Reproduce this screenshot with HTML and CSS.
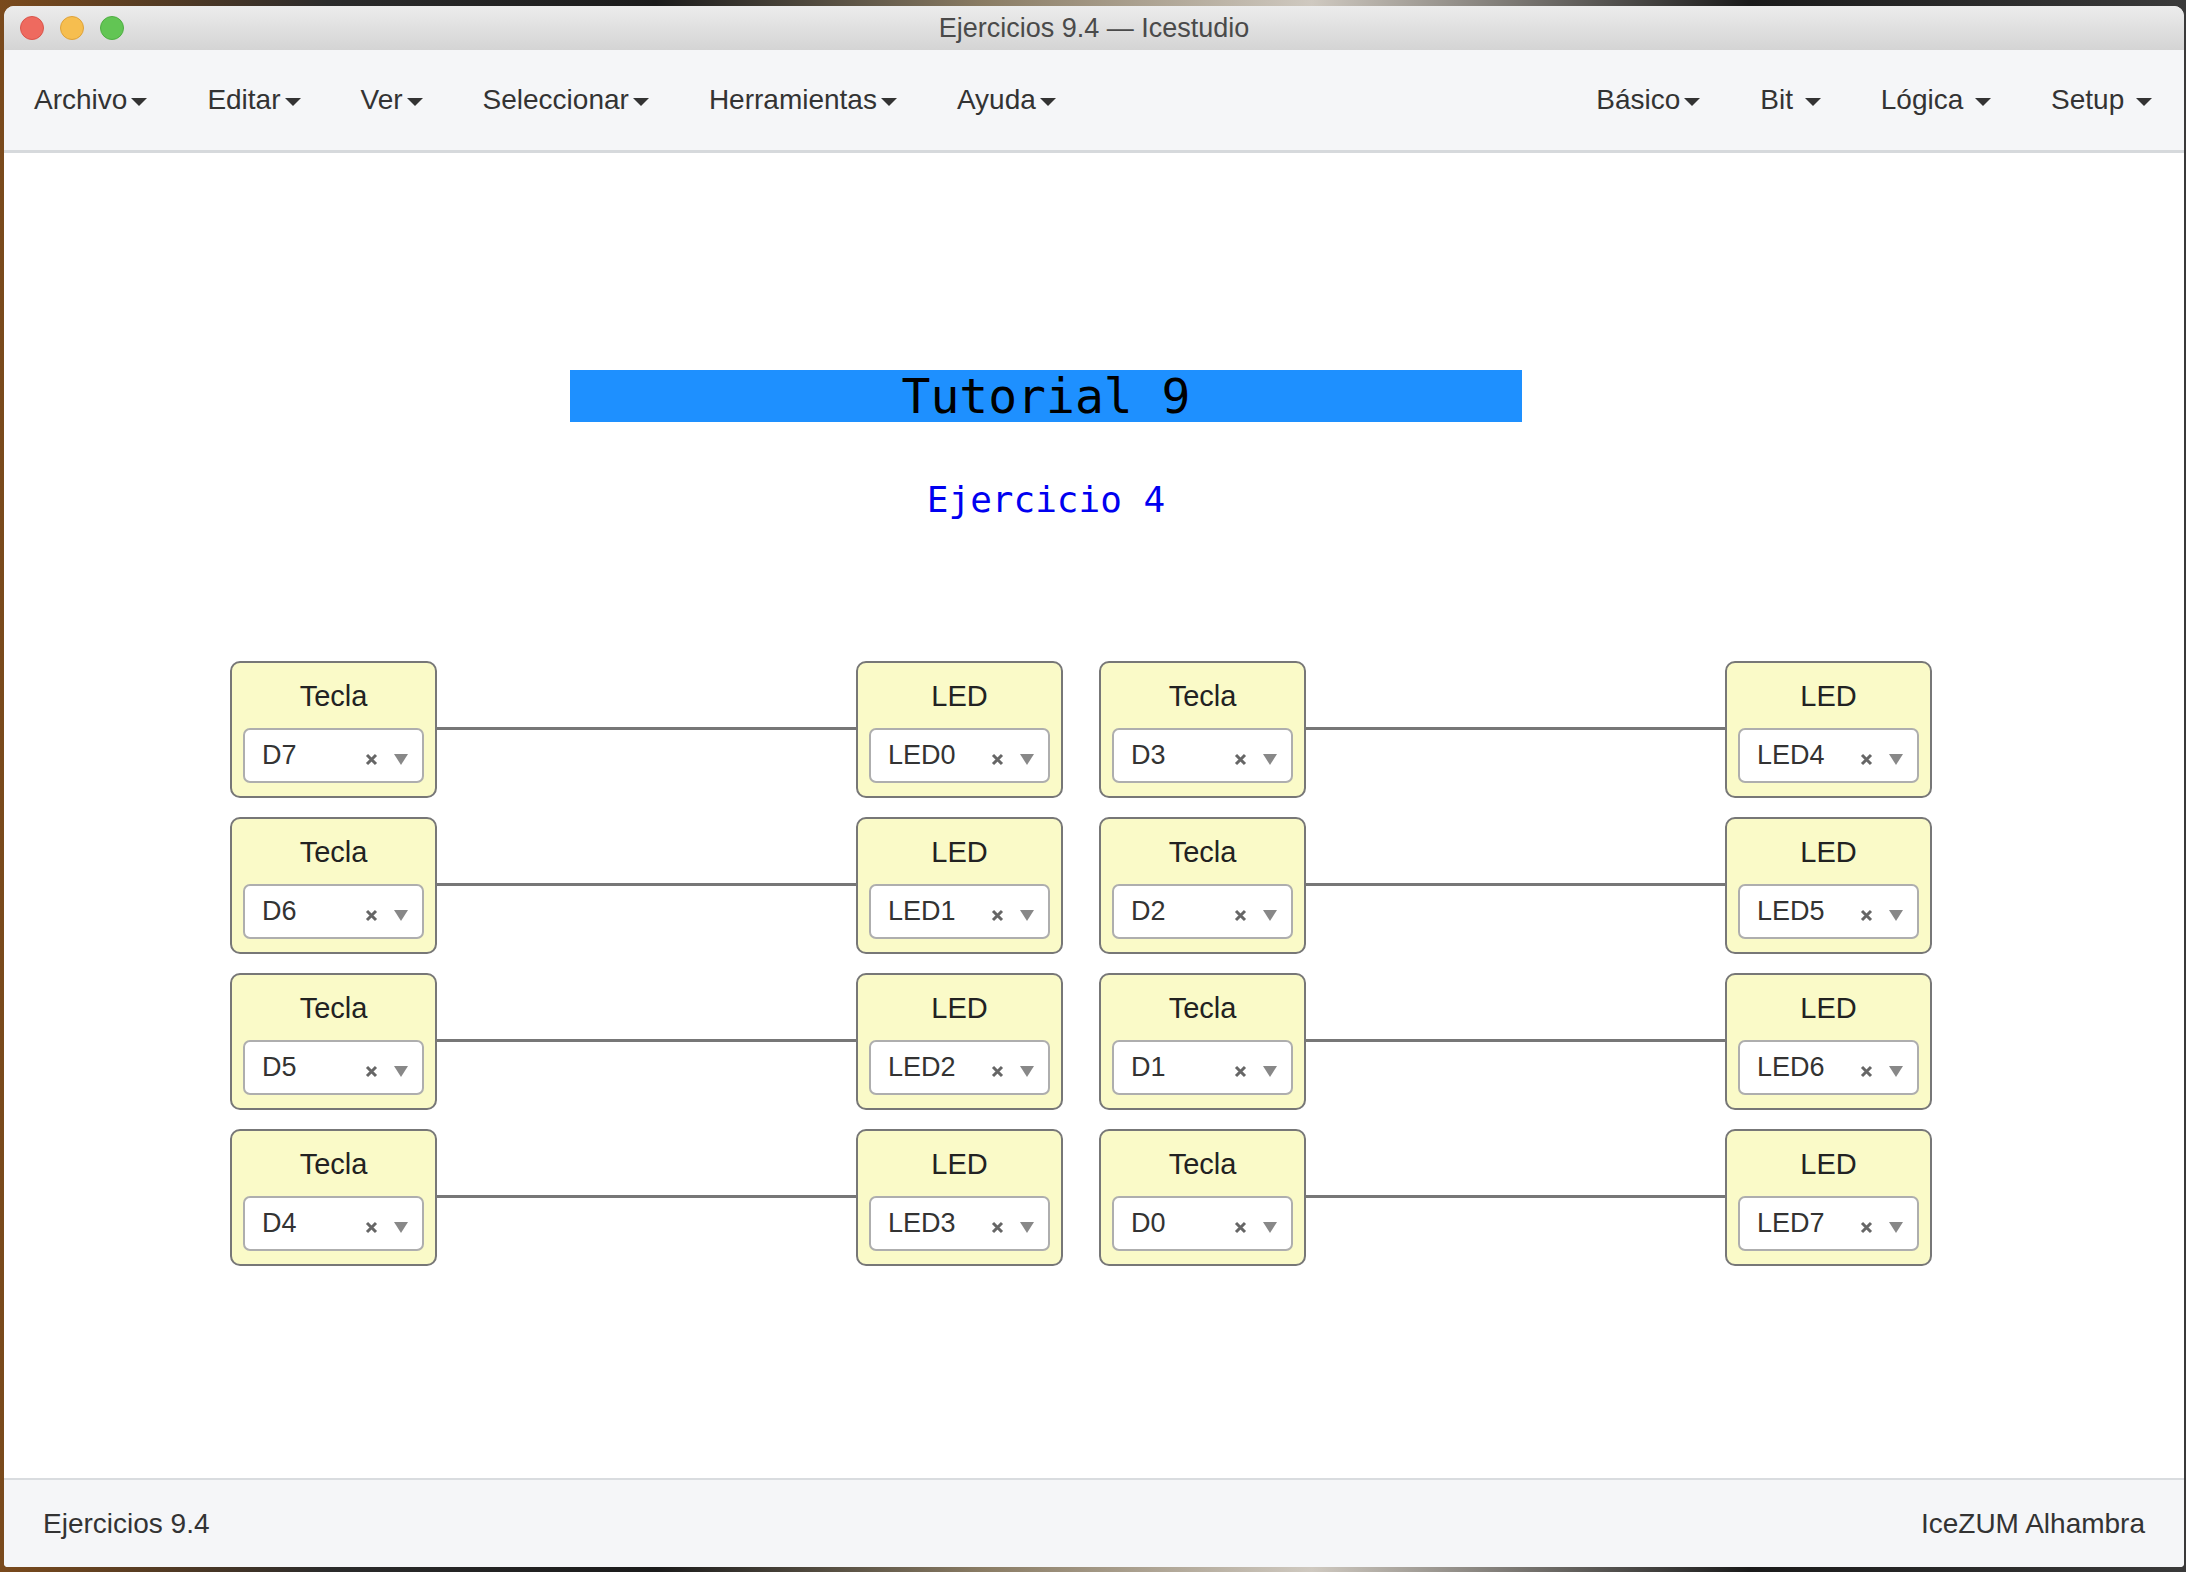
FILE: index.html
```html
<!DOCTYPE html>
<html lang="es">
<head>
<meta charset="utf-8">
<title>Ejercicios 9.4 — Icestudio</title>
<link rel="stylesheet" href="styles.css">
</head>
<body>
<div class="window">
  <header class="titlebar">
    <div class="lights">
      <span class="light red"></span>
      <span class="light yellow"></span>
      <span class="light green"></span>
    </div>
    <div class="title">Ejercicios 9.4 — Icestudio</div>
    <div></div>
  </header>
  <nav class="menubar">
    <ul class="menu">
      <li>Archivo<span class="caret"></span></li>
      <li>Editar<span class="caret"></span></li>
      <li>Ver<span class="caret"></span></li>
      <li>Seleccionar<span class="caret"></span></li>
      <li>Herramientas<span class="caret"></span></li>
      <li>Ayuda<span class="caret"></span></li>
    </ul>
    <ul class="menu">
      <li>Básico<span class="caret"></span></li>
      <li>Bit <span class="caret"></span></li>
      <li>Lógica <span class="caret"></span></li>
      <li>Setup <span class="caret"></span></li>
    </ul>
  </nav>
  <main class="canvas">
    <div class="heading">Tutorial 9</div>
    <div class="subheading">Ejercicio 4</div>
    <div class="diagram">
      <div class="row">
        <div class="block"><div class="label">Tecla</div><div class="select"><span class="value">D7</span><svg class="clear" viewBox="0 0 13 13"><path d="M2 2L11 11M11 2L2 11"/></svg><span class="arrow"></span></div></div>
        <div class="wire"></div>
        <div class="block"><div class="label">LED</div><div class="select"><span class="value">LED0</span><svg class="clear" viewBox="0 0 13 13"><path d="M2 2L11 11M11 2L2 11"/></svg><span class="arrow"></span></div></div>
        <div class="spacer"></div>
        <div class="block"><div class="label">Tecla</div><div class="select"><span class="value">D3</span><svg class="clear" viewBox="0 0 13 13"><path d="M2 2L11 11M11 2L2 11"/></svg><span class="arrow"></span></div></div>
        <div class="wire"></div>
        <div class="block"><div class="label">LED</div><div class="select"><span class="value">LED4</span><svg class="clear" viewBox="0 0 13 13"><path d="M2 2L11 11M11 2L2 11"/></svg><span class="arrow"></span></div></div>
      </div>
      <div class="row">
        <div class="block"><div class="label">Tecla</div><div class="select"><span class="value">D6</span><svg class="clear" viewBox="0 0 13 13"><path d="M2 2L11 11M11 2L2 11"/></svg><span class="arrow"></span></div></div>
        <div class="wire"></div>
        <div class="block"><div class="label">LED</div><div class="select"><span class="value">LED1</span><svg class="clear" viewBox="0 0 13 13"><path d="M2 2L11 11M11 2L2 11"/></svg><span class="arrow"></span></div></div>
        <div class="spacer"></div>
        <div class="block"><div class="label">Tecla</div><div class="select"><span class="value">D2</span><svg class="clear" viewBox="0 0 13 13"><path d="M2 2L11 11M11 2L2 11"/></svg><span class="arrow"></span></div></div>
        <div class="wire"></div>
        <div class="block"><div class="label">LED</div><div class="select"><span class="value">LED5</span><svg class="clear" viewBox="0 0 13 13"><path d="M2 2L11 11M11 2L2 11"/></svg><span class="arrow"></span></div></div>
      </div>
      <div class="row">
        <div class="block"><div class="label">Tecla</div><div class="select"><span class="value">D5</span><svg class="clear" viewBox="0 0 13 13"><path d="M2 2L11 11M11 2L2 11"/></svg><span class="arrow"></span></div></div>
        <div class="wire"></div>
        <div class="block"><div class="label">LED</div><div class="select"><span class="value">LED2</span><svg class="clear" viewBox="0 0 13 13"><path d="M2 2L11 11M11 2L2 11"/></svg><span class="arrow"></span></div></div>
        <div class="spacer"></div>
        <div class="block"><div class="label">Tecla</div><div class="select"><span class="value">D1</span><svg class="clear" viewBox="0 0 13 13"><path d="M2 2L11 11M11 2L2 11"/></svg><span class="arrow"></span></div></div>
        <div class="wire"></div>
        <div class="block"><div class="label">LED</div><div class="select"><span class="value">LED6</span><svg class="clear" viewBox="0 0 13 13"><path d="M2 2L11 11M11 2L2 11"/></svg><span class="arrow"></span></div></div>
      </div>
      <div class="row">
        <div class="block"><div class="label">Tecla</div><div class="select"><span class="value">D4</span><svg class="clear" viewBox="0 0 13 13"><path d="M2 2L11 11M11 2L2 11"/></svg><span class="arrow"></span></div></div>
        <div class="wire"></div>
        <div class="block"><div class="label">LED</div><div class="select"><span class="value">LED3</span><svg class="clear" viewBox="0 0 13 13"><path d="M2 2L11 11M11 2L2 11"/></svg><span class="arrow"></span></div></div>
        <div class="spacer"></div>
        <div class="block"><div class="label">Tecla</div><div class="select"><span class="value">D0</span><svg class="clear" viewBox="0 0 13 13"><path d="M2 2L11 11M11 2L2 11"/></svg><span class="arrow"></span></div></div>
        <div class="wire"></div>
        <div class="block"><div class="label">LED</div><div class="select"><span class="value">LED7</span><svg class="clear" viewBox="0 0 13 13"><path d="M2 2L11 11M11 2L2 11"/></svg><span class="arrow"></span></div></div>
      </div>
    </div>
  </main>
  <footer class="statusbar">
    <span>Ejercicios 9.4</span>
    <span>IceZUM Alhambra</span>
  </footer>
</div>
</body>
</html>
```
FILE: styles.css
```css
html, body {
  margin: 0;
  padding: 0;
}
body {
  width: 2186px;
  height: 1572px;
  overflow: hidden;
  background: linear-gradient(90deg, #7a4a1c 0%, #2b2b2b 15%, #1b1b1b 30%, #8a7c64 45%, #cfc9c0 60%, #1a1a1a 80%, #3a3a3a 100%);
  font-family: "Liberation Sans", Arial, sans-serif;
}
.window {
  margin: 6px 2px 5px 4px;
  width: 2180px;
  height: 1561px;
  display: flex;
  flex-direction: column;
  background: #fff;
  border-radius: 10px 10px 4px 4px;
  overflow: hidden;
}
.titlebar {
  height: 44px;
  flex: none;
  display: grid;
  grid-template-columns: 1fr auto 1fr;
  align-items: center;
  background: linear-gradient(#ececec, #d4d4d4);
}
.lights {
  display: flex;
  gap: 16px;
  padding-left: 16px;
}
.light {
  width: 24px;
  height: 24px;
  border-radius: 50%;
  box-sizing: border-box;
}
.red { background: #ee6a5f; border: 1px solid #d9554b; }
.yellow { background: #f6be4f; border: 1px solid #dea23a; }
.green { background: #62c554; border: 1px solid #4fae43; }
.title {
  font-size: 27px;
  color: #4a4a4a;
}
.menubar {
  flex: none;
  height: 100px;
  border-bottom: 3px solid #d6d9dc;
  background: #f5f6f8;
  display: flex;
  justify-content: space-between;
  padding-right: 2px;
}
.menu {
  list-style: none;
  margin: 0;
  padding: 0;
  display: flex;
}
.menu li {
  padding: 0 30px;
  font-size: 28px;
  line-height: 100px;
  color: #333;
  white-space: pre;
}
.caret {
  display: inline-block;
  width: 0;
  height: 0;
  margin-left: 4px;
  vertical-align: middle;
  border-top: 8px solid #333;
  border-left: 8px solid transparent;
  border-right: 8px solid transparent;
}
.canvas {
  flex: 1;
  background: #fff;
  display: flex;
  flex-direction: column;
}
.heading {
  margin: 217px 0 0 566px;
  width: 952px;
  height: 52px;
  background: #1e90ff;
  color: #000;
  font-family: "DejaVu Sans Mono", monospace;
  font-size: 48px;
  line-height: 52px;
  text-align: center;
}
.subheading {
  margin: 60px 0 0 566px;
  width: 952px;
  font-family: "DejaVu Sans Mono", monospace;
  font-size: 36px;
  line-height: 36px;
  color: #0000f0;
  text-align: center;
}
.diagram {
  margin: 143px 0 0 226px;
  display: flex;
  flex-direction: column;
  gap: 19px;
}
.row {
  display: flex;
  align-items: flex-start;
}
.block {
  box-sizing: border-box;
  width: 207px;
  height: 137px;
  flex: none;
  border: 2px solid #777;
  border-radius: 10px;
  background: #fafac8;
  padding: 17px 11px 13px;
}
.label {
  font-size: 29px;
  line-height: 32px;
  text-align: center;
  color: #222;
  margin-bottom: 16px;
}
.select {
  box-sizing: border-box;
  height: 55px;
  border: 2px solid #aeaeae;
  border-radius: 7px;
  background: #fff;
  display: flex;
  align-items: center;
  padding: 0 14px 0 17px;
  font-size: 27px;
  line-height: 51px;
  color: #333;
}
.value {
  flex: 1;
}
.clear {
  width: 13px;
  height: 13px;
  margin-top: 8px;
  fill: none;
  stroke: #666;
  stroke-width: 3;
}
.arrow {
  width: 0;
  height: 0;
  margin: 8px 0 0 16px;
  border-top: 11px solid #888;
  border-left: 7.5px solid transparent;
  border-right: 7.5px solid transparent;
}
.wire {
  width: 419px;
  height: 3px;
  margin-top: 66px;
  background: #777;
  flex: none;
}
.spacer {
  width: 36px;
  flex: none;
}
.statusbar {
  flex: none;
  height: 87px;
  border-top: 2px solid #d9dcdf;
  background: #f5f6f8;
  display: flex;
  justify-content: space-between;
  align-items: center;
  padding: 0 39px;
  font-size: 28px;
  color: #333;
}
```
